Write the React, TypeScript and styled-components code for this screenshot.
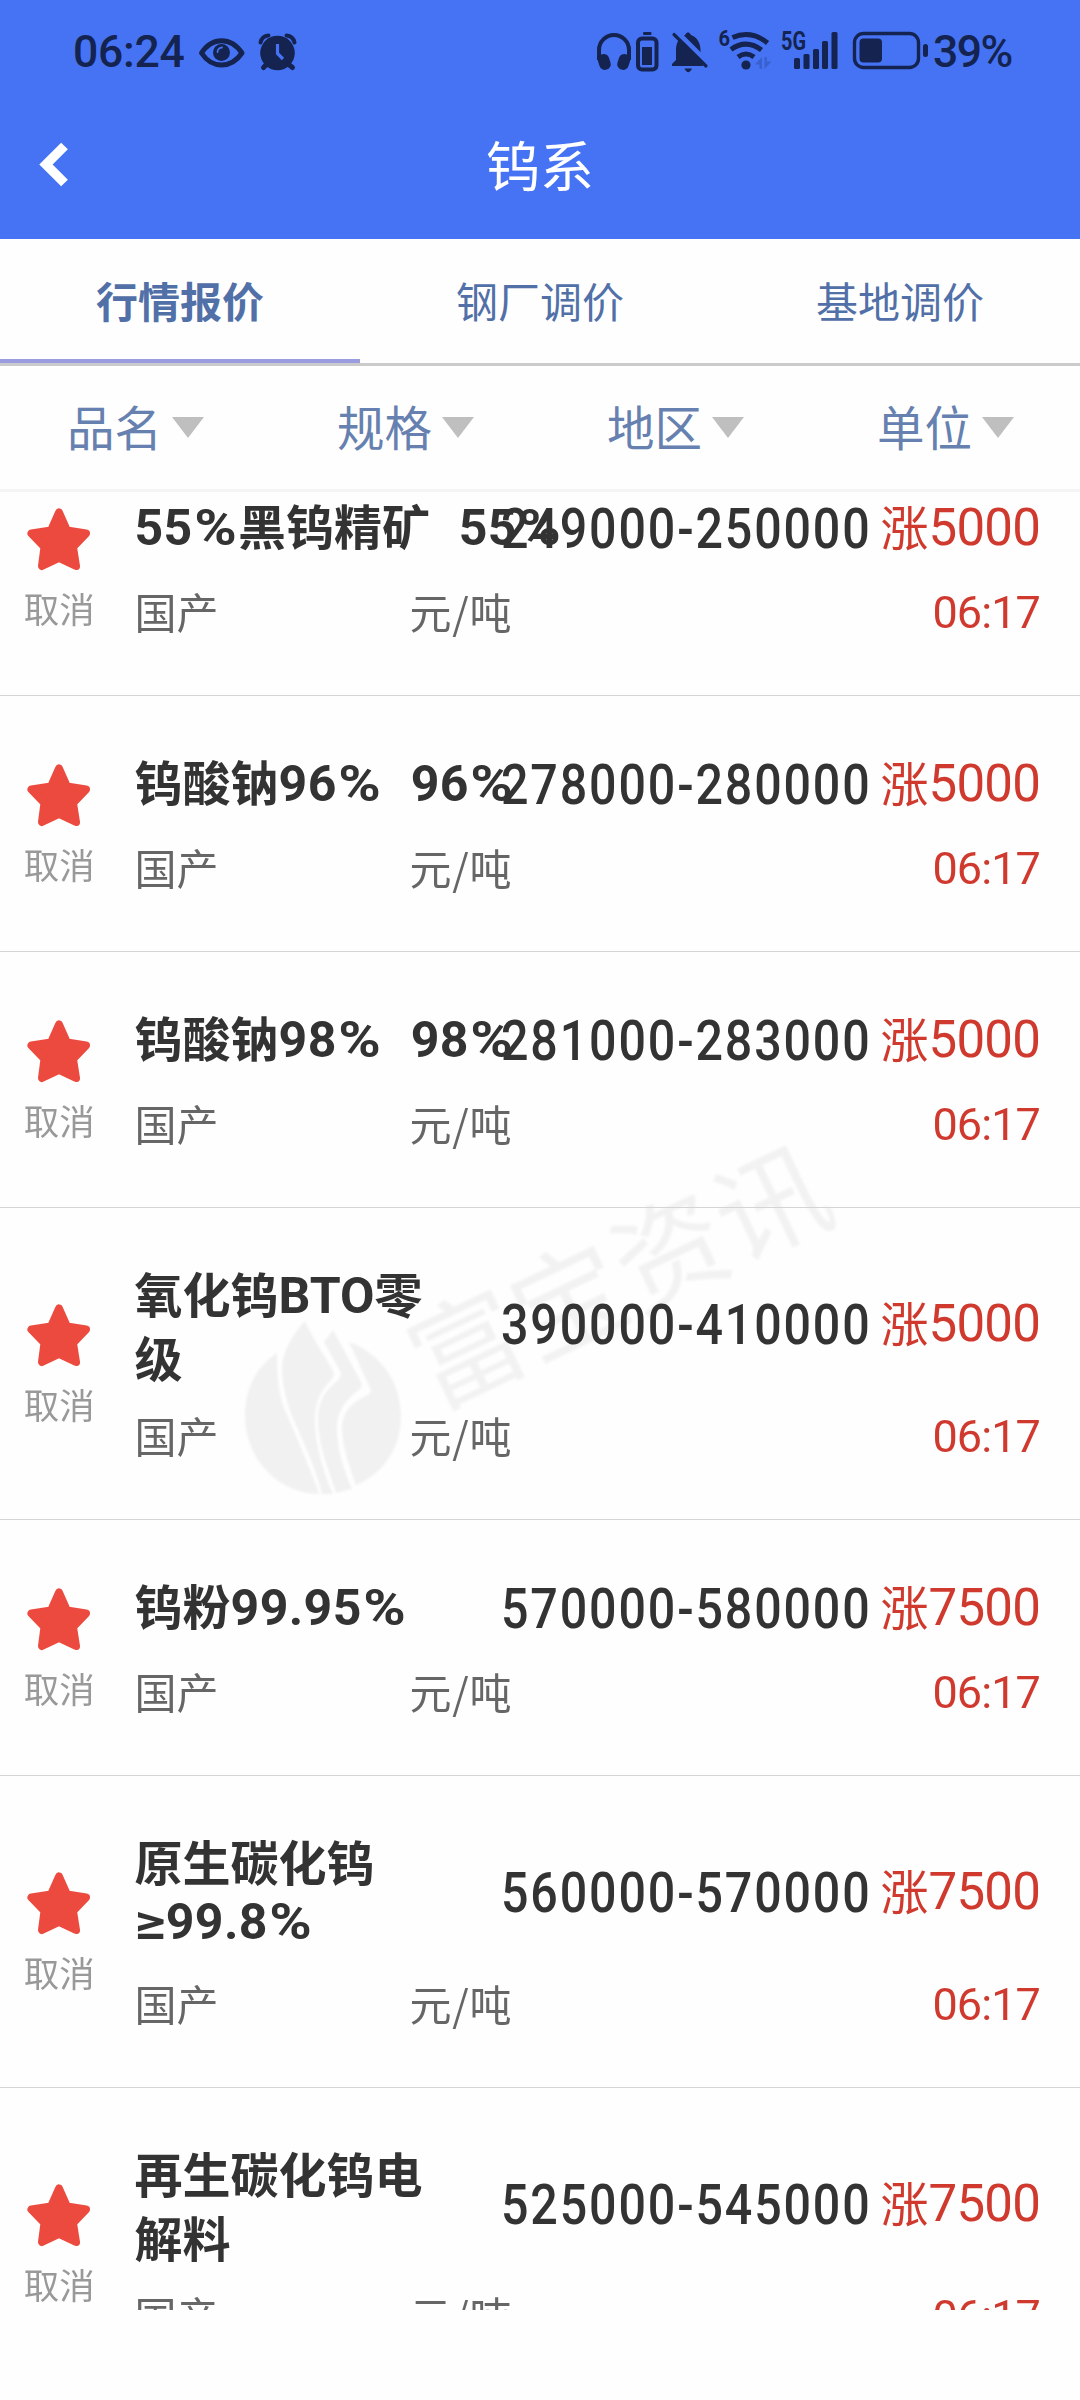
import React from 'react';
import styled, { createGlobalStyle } from 'styled-components';

const CJK = '"Noto Sans CJK SC", sans-serif';
const NUM = `Roboto, ${CJK}`;

const GlobalStyle = createGlobalStyle`
  * { box-sizing: border-box; }
  body { margin: 0; background: #fefefe; font-family: ${CJK}; }
`;

const Screen = styled.div`
  width: 1080px;
  height: 2400px;
  display: flex;
  flex-direction: column;
  overflow: hidden;
  background: #fefefe;
`;

const Header = styled.header`
  height: 239px;
  flex: none;
  background: #4573f3;
`;

const StatusBar = styled.div`
  height: 104px;
  padding: 0 67px 0 73px;
  display: flex;
  justify-content: space-between;
  color: #14234f;
`;

const StatusText = styled.span<{ $width: number; $spacing?: number }>`
  width: ${p => p.$width}px;
  font: 500 44.5px/105px ${NUM};
  letter-spacing: ${p => p.$spacing ?? 0}px;
  white-space: nowrap;
`;

const StatusGroup = styled.div`
  display: flex;
  align-items: flex-start;
`;

const NavBar = styled.div`
  height: 126px;
  display: grid;
  grid-template-columns: 120px 1fr 120px;
`;

const BackButton = styled.button`
  border: 0;
  padding: 37px 0 0 39px;
  background: none;
  display: flex;
  align-items: flex-start;
`;

const PageTitle = styled.h1`
  margin: 0;
  font: 400 54px/120px ${CJK};
  color: #fff;
  text-align: center;
`;

const Tabs = styled.nav`
  flex: none;
  height: 127px;
  display: grid;
  grid-template-columns: repeat(3, 1fr);
  border-bottom: 3px solid #cbcbcb;
`;

const Tab = styled.button<{ $active?: boolean }>`
  border: 0;
  border-bottom: 4px solid ${p => (p.$active ? '#9b9be0' : 'transparent')};
  padding: 2px 0 0;
  background: none;
  color: #5270a8;
  font: ${p => (p.$active ? 700 : 400)} 42px/116px ${CJK};
`;

const Filters = styled.div`
  flex: none;
  height: 126px;
  display: grid;
  grid-template-columns: repeat(4, 1fr);
  border-bottom: 3px solid #f4f4f4;
`;

const Filter = styled.button`
  border: 0;
  background: none;
  padding: 0 0 4px 67px;
  display: flex;
  align-items: center;
  gap: 10px;
  color: #6681b0;
  font: 400 47.5px/118px ${CJK};
`;

const Caret = styled.i`
  margin-top: 3px;
  border: 16.5px solid transparent;
  border-top: 21px solid #bfbfbf;
  border-bottom: 0;
`;

const ListViewport = styled.main`
  position: relative;
  flex: none;
  height: 1818px;
  overflow: hidden;
`;

const List = styled.div`
  position: relative;
  margin-top: -52px;
`;

const Row = styled.section<{ $tall: boolean }>`
  height: ${p => (p.$tall ? 312 : 256)}px;
  display: flex;
  border-bottom: 1px solid #d4d4d4;
`;

const Favourite = styled.div`
  width: 120px;
  display: flex;
  flex-direction: column;
  align-items: center;
  justify-content: center;
  gap: 11px;
  padding: 3px 0 0 2px;
  color: #999;
  font: 400 35.5px/50px ${CJK};
`;

const RowBody = styled.div`
  flex: 1;
  padding: 56px 40px 0 18px;
`;

const TopLine = styled.div<{ $tall: boolean }>`
  height: ${p => (p.$tall ? 120 : 64)}px;
  display: flex;
`;

const Name = styled.div`
  width: 366px;
  flex: none;
  margin-top: -4px;
  color: #333;
  font: 700 48px/64px ${CJK};
  white-space: pre;
`;

const NameLine = styled.div<{ $latin: boolean }>`
  line-height: ${p => (p.$latin ? 52 : 64)}px;
`;

const Latin = styled.span<{ $spacing: number }>`
  font-family: ${NUM};
  font-size: 50px;
  line-height: 1;
  letter-spacing: ${p => p.$spacing}px;
  word-spacing: 1.5px;
`;

const WideSign = styled.span<{ $scale: number; $gap: string }>`
  display: inline-block;
  transform: scaleX(${p => p.$scale});
  margin: ${p => p.$gap};
`;

const Price = styled.div`
  align-self: center;
  flex: none;
  width: 380px;
  padding-top: 1px;
  color: #333;
  font: 500 55px/64px ${NUM};
  letter-spacing: 2.1px;
  white-space: nowrap;
  transform: scaleX(0.88);
  transform-origin: left;
`;

const Change = styled.div`
  align-self: center;
  flex: 1;
  color: #d03a2e;
  font: 400 48px/64px ${CJK};
  white-space: nowrap;
  display: flex;
  align-items: center;
  justify-content: flex-end;
`;

const ChangeLabel = styled.span`
  margin-bottom: 7px;
`;

const ChangeValue = styled.span`
  font-family: ${NUM};
  font-size: 51px;
  letter-spacing: -0.8px;
`;

const BottomLine = styled.div`
  display: flex;
  padding-top: 21px;
  color: #666;
  font: 400 42px/60px ${CJK};
`;

const Origin = styled.span`
  width: 275px;
`;

const Unit = styled.span`
  letter-spacing: 0.8px;
`;

const Time = styled.span`
  margin-left: auto;
  padding-top: 2px;
  color: #d03a2e;
  font-family: ${NUM};
  font-size: 45px;
  letter-spacing: -0.9px;
`;

const Watermark = styled.div`
  position: absolute;
  left: 0;
  top: 0;
  color: #f2f2f2;
  filter: blur(1px);
`;

const WatermarkMark = styled.svg`
  position: absolute;
  left: 243px;
  top: 826px;
`;

const WatermarkText = styled.div`
  position: absolute;
  left: 392px;
  top: 698px;
  width: 450px;
  font: 400 111px/160px ${CJK};
  letter-spacing: 1.5px;
  white-space: nowrap;
  transform: rotate(-25.5deg);
`;

interface Quote {
  name: string[];
  price: string;
  change: string;
}

const quotes: Quote[] = [
  { name: ['55%黑钨精矿  55%'], price: '249000-250000', change: '5000' },
  { name: ['钨酸钠96%  96%'], price: '278000-280000', change: '5000' },
  { name: ['钨酸钠98%  98%'], price: '281000-283000', change: '5000' },
  { name: ['氧化钨BTO零', '级'], price: '390000-410000', change: '5000' },
  { name: ['钨粉99.95%'], price: '570000-580000', change: '7500' },
  { name: ['原生碳化钨', '≥99.8%'], price: '560000-570000', change: '7500' },
  { name: ['再生碳化钨电', '解料'], price: '525000-545000', change: '7500' },
];

function LatinRun({ text }: { text: string }) {
  return (
    <Latin $spacing={/\d/.test(text) ? 0.4 : 0}>
      {text.split(/([%≥])/).filter(Boolean).map((part, i) => {
        if (part === '%') return <WideSign key={i} $scale={1.15} $gap="0 4px 0 4px">%</WideSign>;
        if (part === '≥') return <WideSign key={i} $scale={1.2} $gap="0 3px 0 2px">≥</WideSign>;
        return part;
      })}
    </Latin>
  );
}

function Mixed({ text }: { text: string }) {
  return (
    <>
      {text.split(/([\x20-\x7e≥]+)/).filter(Boolean).map((part, i) =>
        /^[\x20-\x7e≥]/.test(part) ? <LatinRun key={i} text={part} /> : part,
      )}
    </>
  );
}

function Star() {
  return (
    <svg width="66" height="66" viewBox="0 0 66 66">
      <path
        d="M33 6.500 L41 24.500 L60 27.500 L47 41 L50 60 L33 52 L16 60 L18.500 41 L5.500 27.500 L25 24.500 Z"
        fill="#ec4a3e" stroke="#ec4a3e" strokeWidth="8" strokeLinejoin="round"
      />
    </svg>
  );
}

function LeftIcons() {
  return (
    <svg width="110" height="104" viewBox="190 0 110 104" fill="#14234f">
      <path d="M201.500 53 C212 36.500 231 36.500 242 53 C231 69 212 69 201.500 53 Z" fill="none" stroke="#14234f" strokeWidth="5" strokeLinejoin="round" />
      <circle cx="221.500" cy="52.500" r="8.500" />
      <path d="M217.500 52 A4.500 4.500 0 0 1 222 47.500" fill="none" stroke="#4573f3" strokeWidth="1.800" strokeLinecap="round" />
      <circle cx="277.500" cy="53" r="17.300" />
      <path d="M260.500 42.500 Q262 36 268.500 35.500 M294.500 42.500 Q293 36 286.500 35.500" fill="none" stroke="#14234f" strokeWidth="4" strokeLinecap="round" />
      <path d="M267 64 L263.500 67.500 M288 64 L292.500 67.500" stroke="#14234f" strokeWidth="5" strokeLinecap="round" />
      <path d="M277.500 44 V53.500 L283 59" fill="none" stroke="#4573f3" strokeWidth="3.200" />
    </svg>
  );
}

function RightIcons() {
  const c = '#14234f';
  return (
    <svg width="341" height="104" viewBox="592 0 341 104" fill={c}>
      <path d="M599 60 V50 A15 15 0 0 1 629 50 V60" fill="none" stroke={c} strokeWidth="4" />
      <rect x="598.500" y="54" width="11.500" height="16" rx="5.500" transform="rotate(-18 604 62)" />
      <rect x="618" y="54" width="11.500" height="16" rx="5.500" transform="rotate(18 624 62)" />
      <rect x="638" y="38.500" width="18.500" height="31" rx="4" fill="none" stroke={c} strokeWidth="4" />
      <rect x="643" y="32" width="8.500" height="3" rx="1.300" />
      <rect x="642" y="47" width="10" height="18" />
      <path d="M672 66 V64 L676 60 V50 C676 42 680 37 685 35 Q688 29.500 691 35 C697 37 700.500 43 700.500 50 V59 L703 66 Z" />
      <path d="M684.500 68.500 H692 Q688.200 76 684.500 68.500 Z" />
      <path d="M677 32 L709 64" stroke="#4573f3" strokeWidth="5" />
      <path d="M674 34.500 L706 66" stroke={c} strokeWidth="3.200" strokeLinecap="round" />
      <g fill="none" stroke={c} strokeWidth="5">
        <path d="M732.500 37.500 Q751 29.500 767.500 43" />
        <path d="M731 49.500 Q746 38.500 761.500 50" />
        <path d="M738 57 Q746 51 754 57" />
      </g>
      <circle cx="746" cy="65" r="4.600" />
      <path d="M762 57 V69 H759.500 V64.500 H755 Z M764.500 69 V57 H767 V61.500 H771.500 Z" fill="#3860cf" />
      <rect x="794" y="58" width="6" height="11" rx="1.500" />
      <rect x="803.500" y="54" width="6" height="15" rx="1.500" />
      <rect x="813" y="49" width="6" height="20" rx="1.500" />
      <rect x="822" y="41" width="6" height="28" rx="1.500" />
      <rect x="831.500" y="32" width="6" height="37" rx="1.500" />
      <rect x="854.500" y="33.500" width="64" height="34" rx="9" fill="none" stroke={c} strokeWidth="3.400" />
      <rect x="859.500" y="38.500" width="22.500" height="24" rx="4" />
      <rect x="923" y="44" width="5" height="13" rx="2.500" />
      <text x="718.500" y="46" fontFamily="Roboto, sans-serif" fontWeight="700" fontSize="22" textLength="11.500" lengthAdjust="spacingAndGlyphs">6</text>
      <text x="781" y="50" fontFamily="Roboto, sans-serif" fontWeight="700" fontSize="25" textLength="25" lengthAdjust="spacingAndGlyphs">5G</text>
    </svg>
  );
}

function FubaoMark() {
  return (
    <WatermarkMark width="162" height="182" viewBox="242 1318 162 182" fill="#f1f1f1">
      <path d="M276 1353 C256 1366 244 1388 244 1416 C244 1460 279 1494 318 1494 C313 1477 298 1443 284 1410 C277 1394 276 1372 276 1353 Z" />
      <path d="M304 1321 C294 1331 282 1350 281 1367 C281 1385 285 1402 294 1423 C303 1443 316 1472 321 1494 L332 1494 C325 1478 315 1450 314 1425 C313 1400 321 1390 331 1379 Q334 1375 332 1371 C325 1357 312 1340 304 1321 Z" />
      <path d="M332 1330 L323 1342 L339 1371 Q341 1376 337 1380 C325 1390 317 1400 317 1419 C317 1445 327 1468 335 1493 L351 1489 C343 1470 336 1450 336 1427 C337 1408 347 1398 359 1389 Q362 1386 360 1382 Z" />
      <path d="M348 1342 C382 1354 400 1385 400 1416 C400 1448 382 1474 355 1485 C349 1468 341 1448 341 1427 C342 1410 352 1402 367 1395 Q371 1392 369 1388 Z" />
    </WatermarkMark>
  );
}

export default function App() {
  return (
    <Screen>
      <GlobalStyle />
      <Header>
        <StatusBar>
          <StatusGroup>
            <StatusText $width={117} $spacing={-0.3}>06:24</StatusText>
            <LeftIcons />
          </StatusGroup>
          <StatusGroup>
            <RightIcons />
            <StatusText $width={80} $spacing={-1.6}>39%</StatusText>
          </StatusGroup>
        </StatusBar>
        <NavBar>
          <BackButton aria-label="返回">
            <svg width="30" height="46" viewBox="0 0 30 46">
              <path d="M25.500 5 L7 23.500 L25.500 42" fill="none" stroke="#fff" strokeWidth="9.500" />
            </svg>
          </BackButton>
          <PageTitle>钨系</PageTitle>
        </NavBar>
      </Header>
      <Tabs>
        <Tab $active>行情报价</Tab>
        <Tab>钢厂调价</Tab>
        <Tab>基地调价</Tab>
      </Tabs>
      <Filters>
        {['品名', '规格', '地区', '单位'].map(label => (
          <Filter key={label}>{label}<Caret /></Filter>
        ))}
      </Filters>
      <ListViewport>
        <Watermark>
          <FubaoMark />
          <WatermarkText>富宝资讯</WatermarkText>
        </Watermark>
        <List>
          {quotes.map(q => {
            const tall = q.name.length > 1;
            return (
              <Row key={q.price} $tall={tall}>
                <Favourite><Star />取消</Favourite>
                <RowBody>
                  <TopLine $tall={tall}>
                    <Name>
                      {q.name.map(line => (
                        <NameLine key={line} $latin={/^[\x20-\x7e≥]+$/.test(line)}><Mixed text={line} /></NameLine>
                      ))}
                    </Name>
                    <Price>{q.price}</Price>
                    <Change><ChangeLabel>涨</ChangeLabel><ChangeValue>{q.change}</ChangeValue></Change>
                  </TopLine>
                  <BottomLine>
                    <Origin>国产</Origin>
                    <Unit>元/吨</Unit>
                    <Time>06:17</Time>
                  </BottomLine>
                </RowBody>
              </Row>
            );
          })}
        </List>
      </ListViewport>
    </Screen>
  );
}
